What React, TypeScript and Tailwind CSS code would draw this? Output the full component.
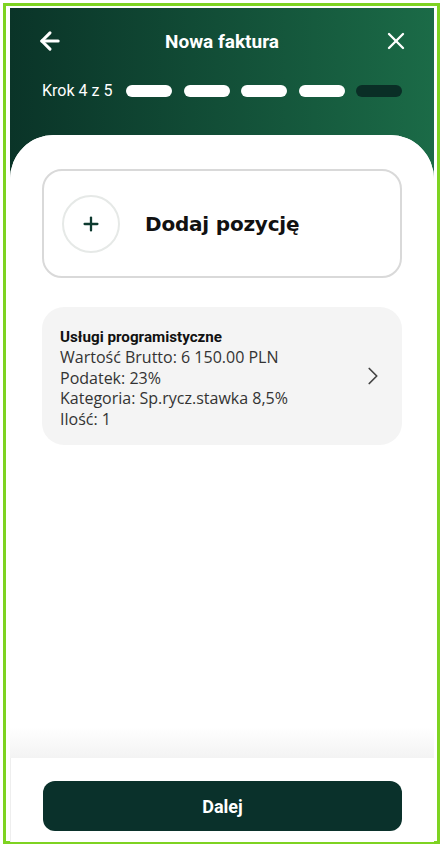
import { ArrowLeft, X, Plus, ChevronRight } from "lucide-react";

const steps = [true, true, true, true, false];

export default function App() {
    return (
        <div className="w-[444px] h-[847px] bg-white pl-[3px] pt-[3px] font-['Roboto',sans-serif]">
            <div className="w-[437px] h-[841px] border-[3px] border-[#7ed321] pl-[4px] pt-[2px] pr-[3px]">
                <div className="w-[424px] h-[834px] flex flex-col bg-gradient-to-r from-[#0a3428] to-[#1b6b47]">
                    {/* Header */}
                    <div className="h-[127px] px-8 pt-[20px]">
                        <div className="grid grid-cols-[28px_1fr_28px] items-center h-[26px]">
                            <ArrowLeft className="w-[28px] h-[28px] text-white -translate-x-[6px] -translate-y-[1px]" strokeWidth={2.6} />
                            <h1 className="text-white font-bold text-[19px] text-center">Nowa faktura</h1>
                            <X className="w-[28px] h-[28px] text-white translate-x-[8px] -translate-y-[1px]" strokeWidth={2} />
                        </div>
                        <div className="flex items-center mt-[25px]">
                            <span className="text-white text-[16px] w-[85px]">Krok 4 z 5</span>
                            <div className="flex gap-[11.5px]">
                                {steps.map((done, i) => (
                                    <div
                                        key={i}
                                        className={`w-[46px] h-[12px] rounded-full ${done ? "bg-white" : "bg-[#0a2e26]"}`}
                                    />
                                ))}
                            </div>
                        </div>
                    </div>

                    {/* Body */}
                    <div className="flex-1 bg-white rounded-t-[44px] overflow-hidden flex flex-col">
                        <div className="flex-1 flex flex-col px-8 pt-[34px] bg-gradient-to-b from-white from-[95%] to-[#f3f3f3]">
                            <button className="h-[109px] rounded-[20px] border-2 border-[#d9d9d9] flex items-center pl-[18px] gap-[25px] text-left">
                                <span className="w-[58px] h-[58px] rounded-full border-2 border-[#e6e9e7] flex items-center justify-center">
                                    <Plus className="w-[22px] h-[22px] text-[#0d3a2f]" strokeWidth={2.5} />
                                </span>
                                <span className="text-[20px] font-bold text-[#111] font-['DejaVu_Sans',sans-serif] tracking-[-0.2px]">
                                    Dodaj pozycję
                                </span>
                            </button>

                            <div className="mt-[29px] h-[138px] rounded-[22px] bg-[#f4f4f4] flex items-center pl-[18px] pr-[14px]">
                                <div className="flex-1 text-[#333] font-['Open_Sans',sans-serif] text-[16px] leading-[20.6px] pt-[4px]">
                                    <div className="font-['Roboto',sans-serif] font-bold text-[15.2px] text-[#111]">
                                        Usługi programistyczne
                                    </div>
                                    <div>Wartość Brutto: 6 150.00 PLN</div>
                                    <div>Podatek: 23%</div>
                                    <div>Kategoria: Sp.rycz.stawka 8,5%</div>
                                    <div>Ilość: 1</div>
                                </div>
                                <ChevronRight className="w-[30px] h-[30px] text-[#444]" strokeWidth={1.4} />
                            </div>
                        </div>

                        {/* Footer */}
                        <div className="h-[84px] bg-white px-8 pt-[23px] border-l border-[#eeeeee]">
                            <button className="w-full h-[50px] rounded-[12px] bg-[#0a312b] text-white font-bold text-[18px]">
                                Dalej
                            </button>
                        </div>
                    </div>
                </div>
            </div>
        </div>
    );
}
